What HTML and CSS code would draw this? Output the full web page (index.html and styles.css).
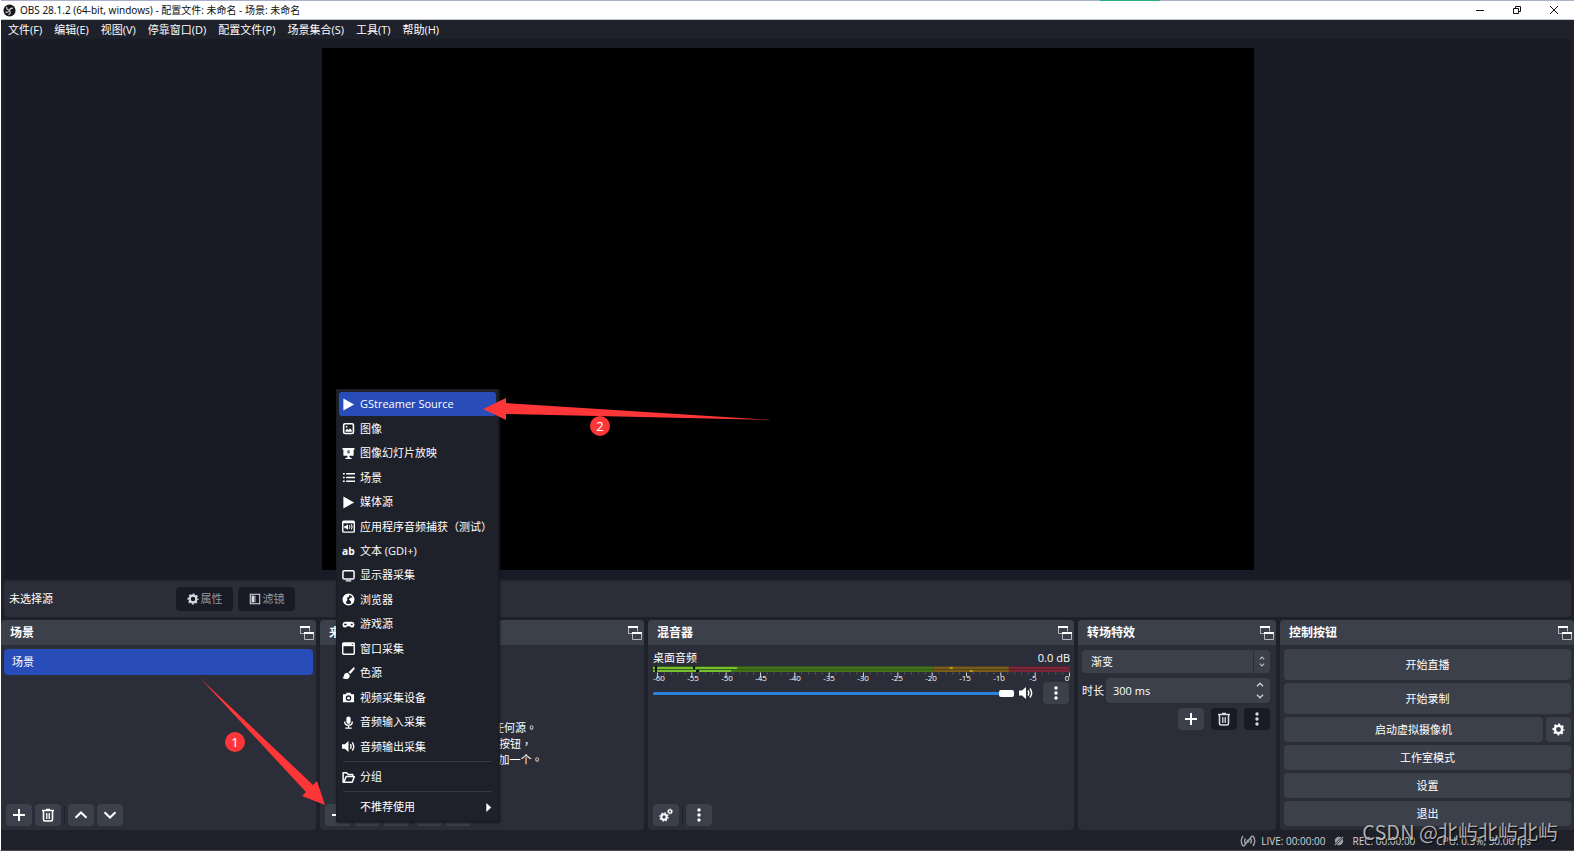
FILE: index.html
```
<!DOCTYPE html>
<html lang="zh-CN">
<head>
<meta charset="utf-8">
<title>OBS 28.1.2 (64-bit, windows) - 配置文件: 未命名 - 场景: 未命名</title>
<link rel="stylesheet" href="styles.css">
</head>
<body>
<svg class="defs" aria-hidden="true">
  <symbol id="i-plus" viewBox="0 0 14 14"><path d="M7 1v12M1 7h12" fill="none" stroke="currentColor" stroke-width="2"/></symbol>
  <symbol id="i-trash" viewBox="0 0 14 14"><path d="M1 2.5h12M5 1.5h4M2.5 3v8.5q0 1.5 1.5 1.5h6q1.500 0 1.500-1.500V3" fill="none" stroke="currentColor" stroke-width="1.600"/><path d="M5.500 5v6M7 5v6M8.500 5v6" fill="none" stroke="currentColor" stroke-width=".9"/></symbol>
  <symbol id="i-up" viewBox="0 0 14 14"><path d="M1.500 9.800 7 4.500l5.500 5.300" fill="none" stroke="currentColor" stroke-width="2"/></symbol>
  <symbol id="i-down" viewBox="0 0 14 14"><path d="M1.500 4.200 7 9.500l5.500-5.300" fill="none" stroke="currentColor" stroke-width="2"/></symbol>
  <symbol id="i-dots" viewBox="0 0 14 14"><g fill="currentColor"><circle cx="7" cy="2" r="1.700"/><circle cx="7" cy="7" r="1.700"/><circle cx="7" cy="12" r="1.700"/></g></symbol>
  <symbol id="i-gear" viewBox="0 0 14 14"><circle cx="7" cy="7" r="3.900" fill="none" stroke="currentColor" stroke-width="2.600"/><circle cx="7" cy="7" r="5.700" fill="none" stroke="currentColor" stroke-width="1.600" stroke-dasharray="2.300 2.177" stroke-dashoffset="1.150"/></symbol>
  <symbol id="i-gears" viewBox="0 0 14 14"><g fill="none" stroke="currentColor"><circle cx="5" cy="9" r="2.700" stroke-width="2"/><circle cx="5" cy="9" r="4.100" stroke-width="1.200" stroke-dasharray="1.600 1.620"/><circle cx="11" cy="3.500" r="1.600" stroke-width="1.300"/><circle cx="11" cy="3.500" r="2.500" stroke-width=".8" stroke-dasharray="1 .963"/></g></symbol>
  <symbol id="i-filter" viewBox="0 0 14 14"><path d="M1.500 1.500h11v11h-11z" fill="none" stroke="currentColor" stroke-width="1.200"/><path d="M3 3h3.500v8H3z" fill="currentColor"/><path d="M7.500 3v8" stroke="currentColor" opacity=".5"/></symbol>
  <symbol id="i-float" viewBox="0 0 14 14"><g fill="none" stroke="#b5b7bc"><path d="M4.500 7.500H.5v-6h9v4"/><path d="M4.500 7.500h9v6h-9z"/></g><path d="M0 1h10M4 7h10" stroke="#fff" stroke-width="2"/></symbol>
  <symbol id="i-speaker" viewBox="0 0 14 14"><path d="M0 4.500h3L7 1v12L3 9.500H0z" fill="currentColor"/><path d="M9 4.500q1.500 2.500 0 5M11 2.500q3.300 4.500 0 9" fill="none" stroke="currentColor" stroke-width="1.500"/></symbol>
  <symbol id="i-play" viewBox="0 0 14 14"><path d="M1.500.5 13 7 1.500 13.500z" fill="currentColor"/></symbol>
  <symbol id="i-image" viewBox="0 0 14 14"><rect x="1.800" y="1.800" width="10.500" height="10.500" rx="1.500" fill="none" stroke="currentColor" stroke-width="1.700"/><path d="M3.800 10.500V9l1.700-1.700L7 8.500l1.700-1.700L10.500 9v1.500z" fill="currentColor"/><circle cx="5" cy="5.200" r="1" fill="currentColor"/></symbol>
  <symbol id="i-slides" viewBox="0 0 14 14"><path d="M.5 1h13v2h-1v6.500H8V11l2.500 1v1h-7v-1L6 11V9.500H1.500V3h-1z" fill="currentColor"/><path d="M8.500 4.200H6.300v2h2.200" fill="none" stroke="#1f212a" stroke-width="1"/></symbol>
  <symbol id="i-list" viewBox="0 0 14 14"><path d="M1 3h2M1 7h2M1 11h2M4.500 3H14M4.500 7H14M4.500 11H14" fill="none" stroke="currentColor" stroke-width="1.600"/></symbol>
  <symbol id="i-appaudio" viewBox="0 0 14 14"><rect x=".8" y="1.300" width="12.400" height="11.700" rx="1" fill="none" stroke="currentColor" stroke-width="1.500"/><path d="M1 1h12v2.500H1zM2.500 6.500H4L6.500 4.500v6L4 8.800H2.500z" fill="currentColor"/><path d="M8 5.700q1 1.800 0 3.600M10 4.700q1.800 2.800 0 5.600" fill="none" stroke="currentColor" stroke-width="1.100"/></symbol>
  <symbol id="i-monitor" viewBox="0 0 14 14"><rect x="1" y="1.800" width="12" height="9" rx="1.500" fill="none" stroke="currentColor" stroke-width="1.600"/><path d="M4 12.800h6" stroke="currentColor" stroke-width="1.300"/></symbol>
  <symbol id="i-globe" viewBox="0 0 14 14"><circle cx="7" cy="7" r="5.700" fill="none" stroke="currentColor" stroke-width="1.500"/><path d="M2 3.500 5 1.500l3 1-1 2-2 .5L6 7 4.500 9.500 4 12 1.500 8zM9 5l3.500-.5.500 4-3 3.500-.5-3L7.500 7z" fill="currentColor"/></symbol>
  <symbol id="i-game" viewBox="0 0 14 14"><path fill-rule="evenodd" d="M3.500 4h7a3.200 3.200 0 0 1 .5 6.300Q9.500 10.500 8.500 9h-3Q4.500 10.500 3 10.300A3.200 3.200 0 0 1 3.500 4zM2.300 6.200v1.600H5V6.200zm7.200 0v1.600h2V6.200z" fill="currentColor"/></symbol>
  <symbol id="i-window" viewBox="0 0 14 14"><rect x=".8" y="1" width="12.400" height="12.200" rx=".8" fill="none" stroke="currentColor" stroke-width="1.500"/><path d="M1 1h12v3.500H1z" fill="currentColor"/><path d="M10.500 2.500h1.500" stroke="#1f212a"/></symbol>
  <symbol id="i-brush" viewBox="0 0 14 14"><path d="M13.300.5q.8.700 0 1.800L9 7.500 7 5.700 12 .8q.8-.7 1.300-.3zM6 6.300 8.300 8.500q.3 4.500-4.300 4.500-2 0-3.500-1.300Q2 11 2 9.500 2.500 6.300 6 6.300z" fill="currentColor"/></symbol>
  <symbol id="i-camera" viewBox="0 0 14 14"><path fill-rule="evenodd" d="M1 3.500h3L5 1.800h4l1 1.700h3v8.700H1zM7 4.700a3 3 0 1 0 0 6 3 3 0 0 0 0-6z" fill="currentColor"/><circle cx="7" cy="7.700" r="1.500" fill="currentColor"/></symbol>
  <symbol id="i-mic" viewBox="0 0 14 14"><rect x="4.700" y=".5" width="4.600" height="8" rx="2.300" fill="currentColor"/><path d="M3 6v1.500q.5 2.500 4 2.500t4-2.500V6M7 10v3M3.500 13h7" fill="none" stroke="currentColor" stroke-width="1.400"/></symbol>
  <symbol id="i-folder" viewBox="0 0 14 14"><path d="M2 12.200H1.200V2h4l1.500 1.800h4.800V6M2 12.200 4.500 6h8.800L11 12.200z" fill="none" stroke="currentColor" stroke-width="1.600" stroke-linejoin="round"/></symbol>
  <symbol id="i-spin-up" viewBox="0 0 8 5"><path d="M1 4.200 4 1.200l3 3" fill="none" stroke="currentColor" stroke-width="1.400"/></symbol>
  <symbol id="i-spin-down" viewBox="0 0 8 5"><path d="M1 .8 4 3.800l3-3" fill="none" stroke="currentColor" stroke-width="1.400"/></symbol>
</svg>

<div class="app">
  <header class="titlebar">
    <svg class="logo" viewBox="0 0 14 14" aria-hidden="true"><circle cx="7" cy="7" r="6.500" fill="#16161a"/><g fill="none" stroke="#d9d9dd" stroke-width="1.200"><path d="M4 3Q3.500 6.500 7 6.500"/><path d="M10.800 4.500Q7.500 4 7 7"/><path d="M6 11.500Q9 10 7 7M2.500 8.500Q5 10 7 7"/></g></svg>
    <span class="titlebar-text">OBS 28.1.2 (64-bit, windows) - 配置文件: 未命名 - 场景: 未命名</span>
    <span class="progress-mark"></span>
    <div class="window-buttons">
      <button aria-label="最小化"><svg viewBox="0 0 10 10"><path d="M1 5.500h8" stroke="#111"/></svg></button>
      <button aria-label="还原"><svg viewBox="0 0 10 10"><path d="M1.500 3.500h5v5h-5zM3.500 3V1.500h5v5H7" fill="none" stroke="#111"/></svg></button>
      <button aria-label="关闭"><svg viewBox="0 0 10 10"><path d="m1 1 8 8M9 1 1 9" stroke="#111" fill="none"/></svg></button>
    </div>
  </header>

  <nav class="menubar">
    <button>文件(F)</button><button>编辑(E)</button><button>视图(V)</button><button>停靠窗口(D)</button><button>配置文件(P)</button><button>场景集合(S)</button><button>工具(T)</button><button>帮助(H)</button>
  </nav>

  <main class="preview"><div class="canvas"></div></main>

  <section class="context-bar">
    <span class="context-name">未选择源</span>
    <button class="dark-btn"><svg><use href="#i-gear"/></svg>属性</button>
    <button class="dark-btn"><svg><use href="#i-filter"/></svg>滤镜</button>
  </section>

  <div class="docks">
    <section class="dock">
      <h2>场景<svg><use href="#i-float"/></svg></h2>
      <ul class="scene-list"><li><button>场景</button></li></ul>
      <div class="toolbar">
        <button class="tool" aria-label="添加场景"><svg><use href="#i-plus"/></svg></button>
        <button class="tool" aria-label="删除场景"><svg><use href="#i-trash"/></svg></button>
        <span class="divider"></span>
        <button class="tool" aria-label="上移"><svg><use href="#i-up"/></svg></button>
        <button class="tool" aria-label="下移"><svg><use href="#i-down"/></svg></button>
      </div>
    </section>

    <section class="dock sources">
      <h2>来源<svg><use href="#i-float"/></svg></h2>
      <p class="empty-hint" lang="zh-TW">您还没有添加任何源。<br>点击下面的 + 按钮，<br>或者右击此处添加一个。</p>
      <div class="toolbar">
        <button class="tool" aria-label="添加源"><svg><use href="#i-plus"/></svg></button>
        <button class="tool" aria-label="删除源"><svg><use href="#i-trash"/></svg></button>
        <button class="tool" aria-label="源属性"><svg><use href="#i-gear"/></svg></button>
        <span class="divider"></span>
        <button class="tool" aria-label="上移源"><svg><use href="#i-up"/></svg></button>
        <button class="tool" aria-label="下移源"><svg><use href="#i-down"/></svg></button>
      </div>

      <div class="popup">
        <ul class="popup-sources">
          <li><button class="active"><svg><use href="#i-play"/></svg>GStreamer Source</button></li>
          <li><button><svg><use href="#i-image"/></svg>图像</button></li>
          <li><button><svg><use href="#i-slides"/></svg>图像幻灯片放映</button></li>
          <li><button><svg><use href="#i-list"/></svg>场景</button></li>
          <li><button><svg><use href="#i-play"/></svg>媒体源</button></li>
          <li><button><svg><use href="#i-appaudio"/></svg>应用程序音频捕获（测试）</button></li>
          <li><button><svg class="icon-ab" viewBox="0 0 14 14"><text x="0" y="11">ab</text></svg>文本 (GDI+)</button></li>
          <li><button><svg><use href="#i-monitor"/></svg>显示器采集</button></li>
          <li><button><svg><use href="#i-globe"/></svg>浏览器</button></li>
          <li><button><svg><use href="#i-game"/></svg>游戏源</button></li>
          <li><button><svg><use href="#i-window"/></svg>窗口采集</button></li>
          <li><button><svg><use href="#i-brush"/></svg>色源</button></li>
          <li><button><svg><use href="#i-camera"/></svg>视频采集设备</button></li>
          <li><button><svg><use href="#i-mic"/></svg>音频输入采集</button></li>
          <li><button><svg><use href="#i-speaker"/></svg>音频输出采集</button></li>
        </ul>
        <ul class="popup-group"><li><button><svg><use href="#i-folder"/></svg>分组</button></li></ul>
        <ul class="popup-group"><li><button class="submenu">不推荐使用<svg viewBox="0 0 6 10"><path d="M0 0 5.500 5 0 10z" fill="#fff"/></svg></button></li></ul>
        <svg class="arrow arrow-two" viewBox="0 0 290 24" aria-hidden="true"><path d="M0 12 23 1v5l266 17L23 17v6z" fill="#fe3638"/></svg>
        <span class="badge badge-two">2</span>
      </div>
      <svg class="arrow arrow-one" viewBox="0 0 126 128" aria-hidden="true"><path d="m0 0 113 107 4-4 8 24-23-9 4-4z" fill="#fe3638"/></svg>
      <span class="badge badge-one">1</span>
    </section>

    <section class="dock">
      <h2>混音器<svg><use href="#i-float"/></svg></h2>
      <div class="mixer">
        <div class="mixer-head"><label for="volume">桌面音频</label><span>0.0 dB</span></div>
        <svg class="meter" viewBox="0 0 416 11" preserveAspectRatio="none" aria-hidden="true">
          <path d="M0 0h280v6H0z" fill="#34561f"/><path d="M280 0h75v6h-75z" fill="#4e431c"/><path d="M355 0h61v6h-61z" fill="#512433"/>
          <path d="M0 1h280v2H0zM0 4h280v2H0z" fill="#437316"/><path d="M280 1h75v2h-75zM280 4h75v2h-75z" fill="#7a5c18"/><path d="M355 1h61v2h-61zM355 4h61v2h-61z" fill="#7d2437"/>
          <path d="M0 1h84v2H0zM0 4h78v2H0z" fill="#77c02e"/>
          <path d="M40 0h2v3h-2zM43 4h3v2h-3zM2 0h2v6H2z" fill="#0c1208"/>
          <path d="M296 1h3v2h-3zM316 4h3v2h-3z" fill="#c99715"/>
          <path class="ticks-minor" d="M4 7.500H415"/>
          <path class="ticks-major" d="M4 8.500H416"/>
        </svg>
        <div class="scale"><span>-60</span><span>-55</span><span>-50</span><span>-45</span><span>-40</span><span>-35</span><span>-30</span><span>-25</span><span>-20</span><span>-15</span><span>-10</span><span>-5</span><span>0</span></div>
        <div class="volume-row">
          <input id="volume" type="range" min="0" max="100" value="100">
          <svg class="speaker"><use href="#i-speaker"/></svg>
          <button class="tool" aria-label="音频选项"><svg><use href="#i-dots"/></svg></button>
        </div>
      </div>
      <div class="toolbar">
        <button class="tool" aria-label="高级音频属性"><svg><use href="#i-gears"/></svg></button>
        <span class="divider"></span>
        <button class="tool" aria-label="混音器菜单"><svg><use href="#i-dots"/></svg></button>
      </div>
    </section>

    <section class="dock">
      <h2>转场特效<svg><use href="#i-float"/></svg></h2>
      <div class="transitions">
        <div class="select-box">
          <select aria-label="转场特效"><option>渐变</option></select>
          <span class="select-arrows"><svg><use href="#i-spin-up"/></svg><svg><use href="#i-spin-down"/></svg></span>
        </div>
        <div class="duration">
          <label for="duration">时长</label>
          <div class="spin-box">
            <input id="duration" type="text" value="300 ms">
            <div class="spin-buttons"><button aria-label="增加"><svg><use href="#i-spin-up"/></svg></button><button aria-label="减少"><svg><use href="#i-spin-down"/></svg></button></div>
          </div>
        </div>
        <div class="transition-tools">
          <button class="tool" aria-label="添加转场"><svg><use href="#i-plus"/></svg></button>
          <button class="tool dim" aria-label="删除转场"><svg><use href="#i-trash"/></svg></button>
          <button class="tool dim" aria-label="转场选项"><svg><use href="#i-dots"/></svg></button>
        </div>
      </div>
    </section>

    <section class="dock">
      <h2>控制按钮<svg><use href="#i-float"/></svg></h2>
      <div class="controls">
        <button class="tall">开始直播</button>
        <button class="tall">开始录制</button>
        <div class="virtual-cam"><button>启动虚拟摄像机</button><button class="cam-settings" aria-label="虚拟摄像机设置"><svg><use href="#i-gear"/></svg></button></div>
        <button>工作室模式</button>
        <button>设置</button>
        <button>退出</button>
      </div>
    </section>
  </div>

  <footer class="statusbar">
    <svg class="live-icon" viewBox="0 0 16 14"><g fill="none" stroke="#a0a1a5" stroke-width="1.400"><path d="M3 2q-3.500 5 0 10M5.500 4.500q-1.700 2.500 0 5M13 2q3.500 5 0 10M10.500 4.500q1.700 2.500 0 5M3.500 12.500l9-11"/></g><circle cx="8" cy="7" r="1.500" fill="#a0a1a5"/></svg>
    <span class="live">LIVE: 00:00:00</span>
    <svg class="rec-icon" viewBox="0 0 12 12"><circle cx="6" cy="6" r="5" fill="#a0a1a5"/><path d="M.5 11.500 11.500.5" stroke="#1f212a" stroke-width="2.600"/><path d="M1 11 11 1" stroke="#a0a1a5" stroke-width="1.300"/></svg>
    <span class="rec">REC: 00:00:00</span>
    <span>CPU: 0.3%, 30.00 fps</span>
    <span class="watermark">CSDN @北屿北屿北屿</span>
  </footer>
</div>
</body>
</html>
```
FILE: styles.css
```
* {
  box-sizing: border-box;
}

body {
  margin: 0;
  background: #1f212a;
  color: #fff;
  font: 11px/16px "Open Sans", "Noto Sans CJK SC", sans-serif;
}

button,
input,
select {
  margin: 0;
  padding: 0;
  border: 0;
  background: none;
  color: inherit;
  font: inherit;
}

ul,
p,
h2 {
  margin: 0;
  padding: 0;
  list-style: none;
}

svg {
  display: block;
  flex: none;
  width: 14px;
  height: 14px;
}

.defs {
  display: none;
}

.app {
  display: flex;
  flex-direction: column;
  height: 100vh;
  border-left: 1px solid #fff;
  border-bottom: 1px solid #4b4b4f;
  overflow: hidden;
}

/* Title bar and menu */

.titlebar {
  position: relative;
  display: flex;
  align-items: center;
  flex: none;
  height: 20px;
  padding: 0 2px;
  border-top: 1px solid #a9b0cc;
  border-bottom: 1px solid #c5c9c9;
  background: #fff;
  color: #111;
  font-family: "Noto Sans", "Noto Sans CJK SC", sans-serif;
  font-size: 10px;
}

.logo {
  width: 13px;
  height: 13px;
  margin-right: 4px;
}

.titlebar-text {
  flex: 1;
}

.progress-mark {
  position: absolute;
  top: -1px;
  right: 414px;
  width: 60px;
  height: 1px;
  background: #23b37e;
}

.window-buttons {
  display: flex;
}

.window-buttons button {
  display: flex;
  align-items: center;
  justify-content: center;
  width: 37px;
  height: 18px;
}

.window-buttons svg {
  width: 10px;
  height: 10px;
}

.menubar {
  display: flex;
  gap: 12px;
  flex: none;
  height: 19px;
  padding-left: 7px;
  align-items: center;
}

.menubar button {
  white-space: nowrap;
}

/* Preview */

.preview {
  flex: 1;
  display: flex;
  justify-content: center;
  min-height: 0;
  margin: 0 3px;
  padding: 9px 0;
  background: #181a25;
}

.canvas {
  aspect-ratio: 932 / 522;
  background: #000;
}

.context-bar {
  display: flex;
  align-items: center;
  gap: 5px;
  flex: none;
  height: 36px;
  margin: 2px 3px 3px;
  padding: 0 5px;
  border-radius: 4px;
  background: #2b2e38;
}

.context-name {
  width: 162px;
}

.dark-btn {
  display: flex;
  align-items: center;
  justify-content: center;
  gap: 2px;
  width: 57px;
  height: 24px;
  border-radius: 4px;
  background: #181a25;
  color: #97989e;
}

.dark-btn svg {
  width: 12px;
  height: 12px;
  color: #d8dae6;
}

/* Docks */

.docks {
  display: grid;
  grid-template-columns: 315fr 324fr 426fr 198fr 294fr;
  gap: 4px;
  flex: none;
  height: 210px;
}

.dock {
  display: flex;
  flex-direction: column;
  min-width: 0;
  border-radius: 4px;
  background: #2b2d38;
}

.dock h2 {
  display: flex;
  align-items: center;
  justify-content: space-between;
  flex: none;
  height: 25px;
  padding: 0 2px 0 9px;
  border-radius: 4px 4px 0 0;
  background: #3c404b;
  font-size: 12px;
  font-weight: 700;
}

.scene-list {
  flex: 1;
  padding: 4px 3px;
}

.scene-list button {
  display: block;
  width: 100%;
  height: 26px;
  padding-left: 8px;
  border-radius: 4px;
  background: #284cb8;
  text-align: left;
}

.toolbar {
  display: flex;
  gap: 3px;
  padding: 0 5px 4px;
}

.tool {
  display: flex;
  align-items: center;
  justify-content: center;
  flex: none;
  width: 26px;
  height: 22px;
  border-radius: 4px;
  background: #3c404b;
}

.tool.dim {
  background: #181a25;
  color: #d5d7e0;
}

.divider {
  width: 1px;
  height: 18px;
  margin-top: 2px;
  background: #1f212a;
}

/* Sources */

.sources {
  position: relative;
}

.empty-hint {
  flex: 1;
  padding-top: 75px;
  font-family: "Open Sans", "Noto Sans CJK TC", sans-serif;
  text-align: center;
}

.popup {
  position: absolute;
  z-index: 2;
  left: 16px;
  bottom: 8px;
  width: 163px;
  padding: 2px;
  border: 1px solid #1a1c25;
  background: #1f212a;
  box-shadow: 1px 1px 2px #15171f;
}

.popup-sources {
  display: grid;
  grid-template-rows: repeat(15, 1fr);
  height: 367px;
}

.popup li {
  display: flex;
}

.popup button {
  display: flex;
  align-items: center;
  gap: 5px;
  width: 100%;
  min-height: 24px;
  padding-left: 3px;
  border-radius: 3px;
  white-space: nowrap;
}

.popup button.active {
  background: #284cb8;
}

.popup button svg {
  width: 13px;
  height: 13px;
}

.icon-ab text {
  fill: #fff;
  font: 700 11px "Open Sans", sans-serif;
}

.popup-group {
  margin: 2px 4px 0;
  padding-top: 3px;
  border-top: 1px solid #363844;
}

.popup-group li {
  margin: 0 -4px;
}

.popup .submenu {
  justify-content: space-between;
  padding: 0 4px 0 21px;
}

.popup .submenu svg {
  width: 6px;
  height: 9px;
}

.arrow {
  position: absolute;
  z-index: 3;
  pointer-events: none;
}

.arrow-one {
  width: 126px;
  height: 128px;
  left: -120px;
  bottom: 24px;
}

.arrow-two {
  width: 290px;
  height: 24px;
  left: 146px;
  top: 7px;
}

.badge {
  position: absolute;
  z-index: 3;
  width: 20px;
  height: 20px;
  border-radius: 50%;
  background: #fe3638;
  font: 13px/20px "Noto Sans", sans-serif;
  text-align: center;
}

.badge-one {
  left: -95px;
  bottom: 78px;
}

.badge-two {
  left: 253px;
  top: 26px;
}

/* Mixer */

.mixer {
  flex: 1;
  padding: 5px 4px 0 5px;
}

.mixer-head {
  display: flex;
  justify-content: space-between;
}

.meter {
  width: 100%;
  height: 11px;
}

.ticks-minor,
.ticks-major {
  fill: none;
}

.ticks-minor {
  stroke: #5c5e68;
  stroke-width: 2;
  stroke-dasharray: 1 5.850;
}

.ticks-major {
  stroke: #d0d1d4;
  stroke-width: 4;
  stroke-dasharray: 1 33.250;
}

.scale {
  display: flex;
  justify-content: space-between;
  margin: -3px -4px 0 -1px;
  font-size: 8px;
  line-height: 8px;
}

.scale span {
  width: 14px;
  text-align: center;
}

.volume-row {
  display: flex;
  align-items: center;
  padding-right: 1px;
}

.volume-row input {
  flex: 1;
  min-width: 0;
  height: 8px;
  appearance: none;
}

.volume-row input::-webkit-slider-runnable-track {
  height: 3px;
  border-radius: 2px;
  background: #2b83dd;
}

.volume-row input::-webkit-slider-thumb {
  appearance: none;
  width: 15px;
  height: 7px;
  margin-top: -2px;
  border-radius: 2px;
  background: #fff;
}

.speaker {
  margin: 0 10px 0 5px;
}

/* Transitions */

.transitions {
  display: flex;
  flex-direction: column;
  gap: 5px;
  padding: 5px 6px 0 4px;
}

.select-box {
  position: relative;
  height: 23px;
}

.select-box select {
  width: 100%;
  height: 100%;
  padding-left: 9px;
  border-radius: 4px;
  background: #3c404b;
  appearance: none;
}

.select-arrows {
  position: absolute;
  top: 0;
  right: 0;
  bottom: 0;
  display: flex;
  flex-direction: column;
  align-items: center;
  justify-content: center;
  gap: 3px;
  width: 17px;
  border-left: 1px solid #2b2d38;
  color: #b9bbc2;
  pointer-events: none;
}

.select-arrows svg {
  width: 6px;
  height: 4px;
}

.duration {
  display: flex;
  align-items: center;
  gap: 2px;
}

.spin-box {
  display: flex;
  flex: 1;
  min-width: 0;
  height: 25px;
  border-radius: 4px;
  background: #3c404b;
}

.spin-box input {
  flex: 1;
  min-width: 0;
  padding-left: 7px;
}

.spin-buttons {
  display: flex;
  flex-direction: column;
  width: 20px;
  color: #d0d1d6;
}

.spin-buttons button {
  display: flex;
  align-items: center;
  justify-content: center;
  flex: 1;
}

.spin-buttons svg {
  width: 8px;
  height: 5px;
}

.transition-tools {
  display: flex;
  justify-content: flex-end;
  gap: 7px;
}

/* Controls */

.controls {
  display: flex;
  flex-direction: column;
  gap: 3px;
  padding: 4px 3px 4px 4px;
}

.controls button {
  height: 25px;
  border-radius: 4px;
  background: #3c404b;
}

.controls .tall {
  height: 31px;
}

.virtual-cam {
  display: flex;
  gap: 3px;
}

.virtual-cam button {
  flex: 1;
}

.virtual-cam .cam-settings {
  display: flex;
  align-items: center;
  justify-content: center;
  flex: none;
  width: 25px;
}

.cam-settings svg {
  width: 13px;
  height: 13px;
}

/* Status bar */

.statusbar {
  position: relative;
  display: flex;
  align-items: center;
  justify-content: flex-end;
  flex: none;
  height: 20px;
  padding: 2px 43px 0 0;
  color: #d4d5d8;
  font-size: 10px;
}

.live-icon {
  width: 16px;
  margin-right: 5px;
}

.live {
  margin-right: 8px;
}

.rec-icon {
  width: 10px;
  height: 10px;
  margin-right: 9px;
}

.rec {
  margin-right: 21px;
}

.watermark {
  position: absolute;
  right: 16px;
  bottom: 6px;
  color: #c4c5c8;
  font: 20px/24px "Noto Sans CJK SC", sans-serif;
  opacity: .85;
  text-shadow: 1px 1px 1px #000;
}
```
